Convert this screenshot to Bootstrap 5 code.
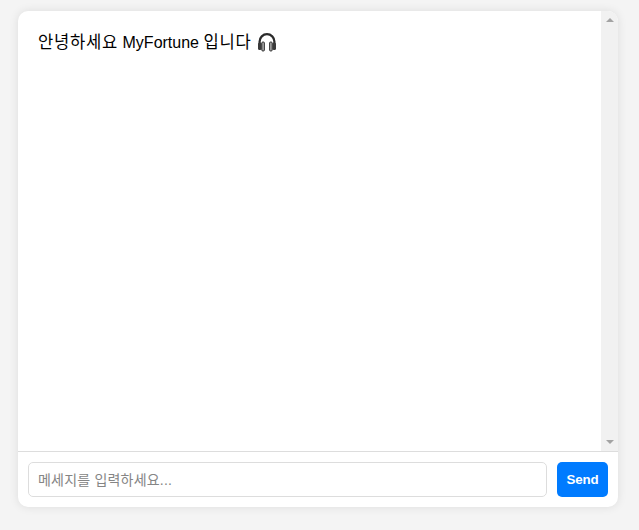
<!DOCTYPE html>
<html lang="ko">
<head>
<meta charset="utf-8">
<title>MyFortune</title>
<link href="https://cdn.jsdelivr.net/npm/bootstrap@5.3.0/dist/css/bootstrap.min.css" rel="stylesheet">
<style>
html,body{height:100%;}
body{background:#f4f4f4;font-family:"Liberation Sans","Noto Sans CJK KR",sans-serif;overflow:hidden;}
.chat-box{width:600px;height:496px;margin:11px 0 0 18px;background:#fff;border-radius:10px;box-shadow:0 0 10px rgba(0,0,0,.1);overflow:hidden;}
.chat-main{height:440px;}
.chat-log{padding:20px;color:#000;font-size:16px;line-height:24px;}
.fake-bar{width:17px;background:#f1f1f1;padding:7px 0;}
.hangul{font-size:16.6px;letter-spacing:.75px;}
.sb-arrow{width:0;height:0;border-left:4px solid transparent;border-right:4px solid transparent;}
.sb-up{border-bottom:4px solid #a3a3a3;}
.sb-down{border-top:4px solid #a3a3a3;}
.head-icon{width:20px;height:20px;vertical-align:-4px;margin-left:1px;}
.chat-foot{height:56px;border-top:1px solid #ddd;padding:10px;gap:10px;}
.chat-input{height:35px;border:1px solid #ddd;border-radius:5px;padding:0 9px;font-size:14px;font-family:inherit;box-shadow:none;}
.chat-input::placeholder{color:#858585;letter-spacing:.2px;}
.chat-send{height:35px;width:51px;padding:0;background:#007bff;border:0;border-radius:5px;font-size:13.33px;font-weight:700;letter-spacing:-.1px;color:#fff;flex:none;}
</style>
</head>
<body>
<div class="chat-box d-flex flex-column">
  <div class="chat-main d-flex">
    <div class="chat-log flex-grow-1">
      <div><span class="hangul">안녕하세요</span> MyFortune <span class="hangul">입니다</span> <svg class="head-icon" viewBox="0 0 20 20" aria-hidden="true"><path d="M2.6 13V9.6a7.4 7.4 0 0 1 14.8 0V13" fill="none" stroke="#2b2b2b" stroke-width="2.2"/><rect x="1" y="10.5" width="3.6" height="7.5" rx="1.5" fill="#3a3a3a"/><rect x="15.4" y="10.5" width="3.6" height="7.5" rx="1.5" fill="#3a3a3a"/><rect x="4.8" y="10" width="2.6" height="9" rx="1" fill="#a8a8a8" stroke="#222" stroke-width=".9"/><rect x="12.6" y="10" width="2.6" height="9" rx="1" fill="#a8a8a8" stroke="#222" stroke-width=".9"/></svg></div>
    </div>
    <div class="fake-bar d-flex flex-column justify-content-between align-items-center flex-shrink-0">
      <span class="sb-arrow sb-up"></span>
      <span class="sb-arrow sb-down"></span>
    </div>
  </div>
  <div class="chat-foot d-flex align-items-start">
    <input class="form-control chat-input flex-grow-1" type="text" placeholder="메세지를 입력하세요...">
    <button class="btn chat-send" type="button">Send</button>
  </div>
</div>
<script src="https://cdn.jsdelivr.net/npm/bootstrap@5.3.0/dist/js/bootstrap.bundle.min.js"></script>
</body>
</html>
